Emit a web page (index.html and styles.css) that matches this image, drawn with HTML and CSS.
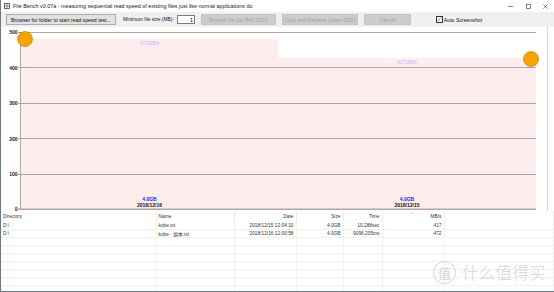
FILE: index.html
```html
<!DOCTYPE html>
<html lang="en">
<head>
    <meta charset="UTF-8">
    <meta name="viewport" content="width=device-width, initial-scale=1.0">
    <title>File Bench</title>
    <link rel="stylesheet" href="styles.css">
</head>
<body>
    <div class="window">
        <div class="titlebar">
            <svg class="app-icon" width="6" height="6" viewBox="0 0 6 6">
                <rect x="0.5" y="0.5" width="5" height="5" fill="none" stroke="#444" stroke-width="0.8"/>
                <line x1="3" y1="0.5" x2="3" y2="5.5" stroke="#444" stroke-width="0.6"/>
                <line x1="0.5" y1="3" x2="5.5" y2="3" stroke="#444" stroke-width="0.6"/>
            </svg>
            <span class="title">File Bench v0.07a - measuring sequential read speed of existing files just like normal applications do</span>
            <div class="win-controls">
                <svg width="5" height="5" viewBox="0 0 5 5"><line x1="0" y1="2.5" x2="5" y2="2.5" stroke="#333" stroke-width="0.6"/></svg>
                <svg width="5" height="5" viewBox="0 0 5 5"><rect x="0.5" y="0.5" width="4" height="4" fill="none" stroke="#333" stroke-width="0.6"/></svg>
                <svg width="5" height="5" viewBox="0 0 5 5"><path d="M0.3 0.3 L4.7 4.7 M4.7 0.3 L0.3 4.7" stroke="#333" stroke-width="0.6"/></svg>
            </div>
        </div>

        <div class="toolbar">
            <button class="btn btn-browse">Browser for folder to start read speed test...</button>
            <span class="min-label">Minimum file size (MB):</span>
            <input class="size-input" type="text" value="1">
            <button class="btn btn-rewrite" disabled>Rewrite file (for 840 SSD)</button>
            <button class="btn btn-copy" disabled>Copy and Replace (other SSD)</button>
            <button class="btn btn-cancel" disabled>Cancel</button>
            <label class="auto-shot"><span class="check-box">&#10003;</span>Auto Screenshot</label>
        </div>

        <svg class="chart" width="553" height="184" viewBox="0 27 553 184">
            <!-- bars -->
            <rect x="20" y="39" width="257" height="170" fill="#ffeded"/>
            <rect x="277" y="58" width="258" height="151" fill="#ffeded"/>
            <!-- grid -->
            <g stroke="#a8a8a8" stroke-width="1">
                <line x1="17" y1="32.5" x2="535" y2="32.5"/>
                <line x1="17" y1="67.5" x2="535" y2="67.5"/>
                <line x1="17" y1="103.5" x2="535" y2="103.5"/>
                <line x1="17" y1="138.5" x2="535" y2="138.5"/>
                <line x1="17" y1="174.5" x2="535" y2="174.5"/>
                <line x1="19.5" y1="32" x2="19.5" y2="209"/>
            </g>
            <line x1="17" y1="209.2" x2="535" y2="209.2" stroke="#b3a5a5" stroke-width="1.6"/>
            <line x1="546.5" y1="27" x2="546.5" y2="211" stroke="#d6d6d6"/>
            <!-- y axis labels -->
            <g class="axis-label" text-anchor="end">
                <text x="16.5" y="34">500</text>
                <text x="16.5" y="69.5">400</text>
                <text x="16.5" y="105">300</text>
                <text x="16.5" y="140.5">200</text>
                <text x="16.5" y="176">100</text>
                <text x="16.5" y="211">0</text>
            </g>
            <!-- bar labels -->
            <g text-anchor="middle">
                <text class="speed-label" x="148.5" y="44.5">472MB/s</text>
                <text class="speed-label" x="406" y="64">417MB/s</text>
                <text class="size-label" x="148.5" y="201">4.0GB</text>
                <text class="date-label" x="148.5" y="206.5">2018/12/16</text>
                <text class="size-label" x="406" y="201">4.0GB</text>
                <text class="date-label" x="406" y="206.5">2018/12/15</text>
            </g>
            <!-- markers -->
            <circle cx="24" cy="39" r="7.5" fill="#f7a300" stroke="#b57600" stroke-width="0.6"/>
            <circle cx="530" cy="59" r="7.5" fill="#f7a300" stroke="#b57600" stroke-width="0.6"/>
        </svg>

        <div class="file-list">
            <table>
                <colgroup>
                    <col class="c-dir">
                    <col class="c-name">
                    <col class="c-date">
                    <col class="c-size">
                    <col class="c-time">
                    <col class="c-speed">
                    <col>
                </colgroup>
                <thead>
                    <tr>
                        <th>Directory</th>
                        <th>Name</th>
                        <th class="num">Date</th>
                        <th class="num">Size</th>
                        <th class="num">Time</th>
                        <th class="num sorted">MB/s</th>
                        <th></th>
                    </tr>
                </thead>
                <tbody>
                    <tr>
                        <td>D:\</td>
                        <td>kobe.txt</td>
                        <td class="num">2018/12/15 12:04:10</td>
                        <td class="num">4.0GB</td>
                        <td class="num">10.288sec</td>
                        <td class="num">417</td>
                        <td></td>
                    </tr>
                    <tr>
                        <td>D:\</td>
                        <td>kobe - 副本.txt</td>
                        <td class="num">2018/12/16 12:00:58</td>
                        <td class="num">4.0GB</td>
                        <td class="num">9096.205ms</td>
                        <td class="num">472</td>
                        <td></td>
                    </tr>
                    <tr><td></td><td></td><td></td><td></td><td></td><td></td><td></td></tr>
                    <tr><td></td><td></td><td></td><td></td><td></td><td></td><td></td></tr>
                    <tr><td></td><td></td><td></td><td></td><td></td><td></td><td></td></tr>
                    <tr><td></td><td></td><td></td><td></td><td></td><td></td><td></td></tr>
                    <tr><td></td><td></td><td></td><td></td><td></td><td></td><td></td></tr>
                    <tr><td></td><td></td><td></td><td></td><td></td><td></td><td></td></tr>
                    <tr><td></td><td></td><td></td><td></td><td></td><td></td><td></td></tr>
                </tbody>
            </table>
        </div>

        <div class="watermark">
            <span class="wm-circle">值</span>
            <span class="wm-text">什么值得买</span>
        </div>
    </div>
</body>
</html>
```

FILE: styles.css
```css
body {
    margin: 0;
    font-family: "Liberation Sans", "Noto Sans CJK SC", sans-serif;
    background-color: #ffffff;
    color: #222;
}

.window {
    position: relative;
    width: 553px;
    height: 291px;
    border-left: 1px solid #6f7882;
    border-bottom: 1px solid #6f7882;
    overflow: hidden;
    background-color: #ffffff;
}

.titlebar {
    display: flex;
    align-items: center;
    height: 12px;
    padding-left: 3px;
    background-color: #ffffff;
}

.app-icon {
    flex: none;
}

.title {
    margin-left: 3px;
    font-size: 5.4px;
    color: #1a1a1a;
    white-space: nowrap;
}

.win-controls {
    display: flex;
    gap: 12.5px;
    margin-left: auto;
    margin-right: 6px;
}

.toolbar {
    display: flex;
    align-items: center;
    height: 15px;
    padding-left: 5px;
    background-color: #f0f0f0;
    font-size: 5.2px;
}

.btn {
    height: 11px;
    padding: 0;
    font-family: inherit;
    font-size: 5.2px;
    color: #111;
    background-color: #e1e1e1;
    border: 1px solid #adadad;
}

.btn:disabled {
    color: #a3a3a3;
    background-color: #cccccc;
    border-color: #c4c4c4;
}

.btn-browse {
    width: 110px;
}

.min-label {
    margin-left: 7px;
    font-size: 4.9px;
    color: #111;
}

.size-input {
    width: 18px;
    height: 9px;
    margin-left: 3px;
    padding: 0 1px;
    box-sizing: border-box;
    border: 1px solid #7a7a7a;
    font-family: inherit;
    font-size: 5.2px;
    text-align: right;
}

.btn-rewrite {
    width: 75px;
    margin-left: 6px;
}

.btn-copy {
    width: 76px;
    margin-left: 6px;
}

.btn-cancel {
    width: 47px;
    margin-left: 6px;
}

.auto-shot {
    display: flex;
    align-items: center;
    margin-left: 25px;
    color: #111;
}

.check-box {
    display: inline-flex;
    align-items: center;
    justify-content: center;
    width: 5px;
    height: 5px;
    margin-right: 1px;
    border: 1px solid #333;
    background-color: #fff;
    font-size: 5px;
    line-height: 1;
}

.chart {
    display: block;
}

.axis-label {
    font-size: 5px;
    font-weight: bold;
    fill: #222;
}

.speed-label {
    font-size: 5px;
    fill: #c3b6ff;
}

.size-label {
    font-size: 5px;
    font-weight: bold;
    fill: #1c1cff;
}

.date-label {
    font-size: 5px;
    font-weight: bold;
    fill: #111;
}

.file-list {
    height: 80px;
    overflow: hidden;
}

.file-list table {
    width: 553px;
    table-layout: fixed;
    border-collapse: collapse;
    font-size: 4.8px;
    color: #333;
}

.c-dir { width: 155px; }
.c-name { width: 78px; }
.c-date { width: 62px; }
.c-size { width: 47px; }
.c-time { width: 39px; }
.c-speed { width: 62px; }

.file-list th {
    height: 11px;
    padding: 0 2px;
    font-weight: normal;
    text-align: left;
    border-right: 1px solid #ececec;
    white-space: nowrap;
}

.file-list td {
    height: 7px;
    padding: 0 2px;
    border-right: 1px solid #f0f0f0;
    border-bottom: 1px solid #f0f0f0;
    white-space: nowrap;
    overflow: hidden;
}

.file-list .num {
    text-align: right;
}

.sorted {
    position: relative;
}

.sorted::before {
    content: "^";
    position: absolute;
    top: 0;
    left: 28px;
    font-size: 4px;
    color: #888;
}

.watermark {
    position: absolute;
    right: 8px;
    bottom: 7px;
    display: flex;
    align-items: center;
    gap: 6px;
    color: #d4d4d4;
    pointer-events: none;
}

.wm-circle {
    display: flex;
    align-items: center;
    justify-content: center;
    width: 21px;
    height: 21px;
    border: 1.5px solid #d4d4d4;
    border-radius: 50%;
    font-size: 13px;
}

.wm-text {
    font-size: 16.5px;
    letter-spacing: 0.3px;
    font-weight: 300;
}
```
